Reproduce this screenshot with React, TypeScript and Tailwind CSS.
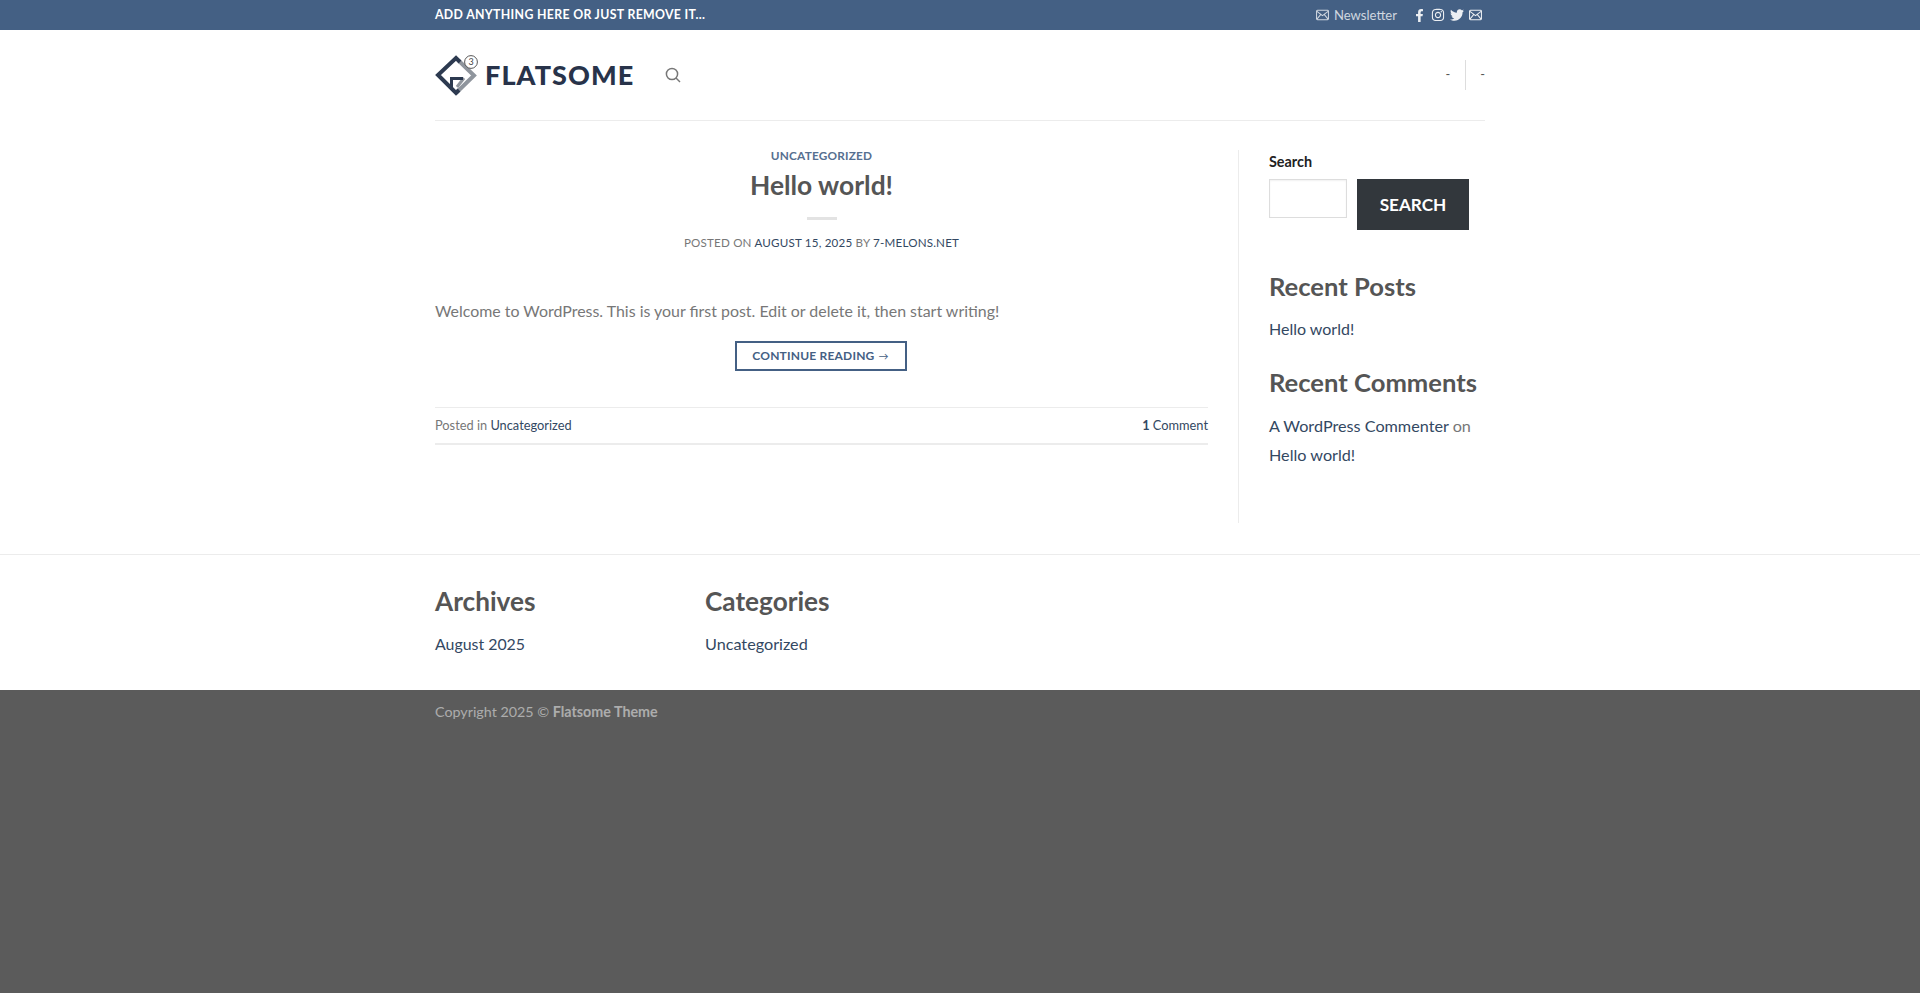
import { FaFacebookF, FaInstagram, FaTwitter } from "react-icons/fa"

function MailIcon({ className }: { className?: string }) {
  return (
    <svg viewBox="0 0 14 12" className={className} fill="none" stroke="currentColor" strokeWidth="1.1">
      <rect x="0.6" y="1" width="12.8" height="10" rx="1" />
      <path d="M1 2l6 4.6L13 2M1 10.4l4.2-5M13 10.4l-4.2-5" />
    </svg>
  )
}

function Logo() {
  return (
    <svg viewBox="0 0 44 44" className="w-[44px] h-[44px] shrink-0" fill="none">
      <path d="M24 8l15 14.5L21 40" stroke="#8f959d" strokeWidth="4" />
      <path d="M25 9l-4-4L3 22l18 18 3-3" stroke="#2d3a50" strokeWidth="4" />
      <path d="M29 25l-7 9" stroke="#8f959d" strokeWidth="3" />
      <path d="M15 25.5h13M16.5 25v10" stroke="#2d3a50" strokeWidth="3" />
      <circle cx="36" cy="9" r="6.4" fill="#fff" stroke="#444" strokeWidth="0.9" />
      <text x="36" y="12" textAnchor="middle" fontSize="9" fill="#444" fontFamily="Lato, sans-serif">3</text>
    </svg>
  )
}

function WidgetTitle({ children }: { children: string }) {
  return <h3 className="text-[25.6px] leading-[32px] font-bold text-[#555]">{children}</h3>
}

export default function App() {
  return (
    <div className="min-h-[993px] flex flex-col bg-white [font-family:Lato,sans-serif] text-[#777]">
      {/* Top bar */}
      <div className="h-[30px] bg-[#446084]">
        <div className="w-[1050px] mx-auto h-full flex items-center justify-between pt-[1px]">
          <span className="text-[12.3px] font-bold tracking-[0.33px] text-white uppercase">Add anything here or just remove it...</span>
          <div className="flex items-center text-white/75">
            <MailIcon className="w-[13px] h-[12px] mr-[5px]" />
            <span className="text-[13.1px]">Newsletter</span>
            <div className="flex items-center gap-[5px] ml-[16px] mr-[3px] text-white/90">
              <FaFacebookF className="w-[13px] h-[13px]" />
              <FaInstagram className="w-[14px] h-[14px]" />
              <FaTwitter className="w-[14px] h-[14px]" />
              <MailIcon className="w-[13px] h-[12px]" />
            </div>
          </div>
        </div>
      </div>

      {/* Header */}
      <header className="w-[1050px] mx-auto h-[91px] border-b border-[#ececec] flex items-center">
        <Logo />
        <span className="ml-[6px] mb-[2px] text-[27px] leading-none font-black tracking-[1.1px] text-[#28334a]">FLATSOME</span>
        <svg viewBox="0 0 16 16" className="ml-[31px] mb-[1px] w-[16px] h-[16px] text-[#777]" fill="none" stroke="currentColor" strokeWidth="1.5">
          <circle cx="7" cy="7" r="5.6" />
          <path d="M11 11l4 4" />
        </svg>
        <div className="ml-auto flex items-center text-[12.8px] text-[#555]">
          <span className="pr-[15px]">-</span>
          <span className="h-[30px] border-l border-[#ddd]" />
          <span className="pl-[14px]">-</span>
        </div>
      </header>

      {/* Main */}
      <main className="w-[1050px] mx-auto pt-[28px] flex h-[433px] shrink-0">
        <article className="w-[773px] shrink-0">
          <div className="text-center">
            <div className="text-[11.8px] leading-[14px] font-bold tracking-[0.2px] text-[#446084] uppercase opacity-90">Uncategorized</div>
            <h1 className="mt-[6px] text-[26.4px] leading-[32px] font-bold text-[#555]">Hello world!</h1>
            <div className="w-[30px] h-[3px] bg-[#e3e3e3] mx-auto mt-[16px]" />
            <div className="mt-[16px] text-[11.6px] leading-[14px] tracking-[0.2px] uppercase">
              Posted on <span className="text-[#334862]">August 15, 2025</span> by <span className="text-[#334862]">7-melons.net</span>
            </div>
          </div>
          <p className="mt-[49px] text-[15.93px] leading-[24px]">Welcome to WordPress. This is your first post. Edit or delete it, then start writing!</p>
          <div className="mt-[18px] text-center">
            <span className="inline-flex items-center justify-center gap-[4px] w-[172px] h-[30px] -translate-x-[1px] border-2 border-[#446084] text-[12px] font-bold tracking-[0.2px] text-[#446084] uppercase">Continue reading <span className="text-[10px] font-normal">→</span></span>
          </div>
          <div className="mt-[36px] h-[38px] border-t border-b-2 border-[#ececec] flex items-center justify-between text-[12.8px]">
            <span>Posted in <span className="text-[#334862]">Uncategorized</span></span>
            <span className="text-[#334862]"><b>1</b> Comment</span>
          </div>
        </article>

        <aside className="ml-[30px] mt-[1px] pl-[30px] flex-1 h-[373px] pt-[2px] border-l border-[#ececec]">
          <div className="text-[14.4px] leading-[20px] font-bold text-[#222]">Search</div>
          <div className="flex items-start gap-[10px] mt-[7px]">
            <div className="w-[78px] h-[39px] border border-[#ddd] shadow-[inset_0_1px_2px_rgba(0,0,0,0.06)]" />
            <button className="w-[112px] h-[51px] bg-[#32373c] text-[17.2px] font-bold text-white uppercase">Search</button>
          </div>
          <div className="mt-[40px]"><WidgetTitle>Recent Posts</WidgetTitle></div>
          <div className="mt-[15px] text-[16px] leading-[24px] text-[#334862]">Hello world!</div>
          <div className="mt-[25px]"><WidgetTitle>Recent Comments</WidgetTitle></div>
          <div className="mt-[13px] text-[16.2px] leading-[29px] text-[#334862]">
            A WordPress Commenter <span className="text-[#777]">on</span>
            <br />
            Hello world!
          </div>
        </aside>
      </main>

      {/* Footer widgets */}
      <section className="h-[136px] border-t border-[#ececec]">
        <div className="w-[1050px] mx-auto pt-[30px] flex">
          <div className="w-[270px]">
            <h3 className="text-[26.2px] leading-[32px] font-bold text-[#555]">Archives</h3>
            <div className="mt-[15px] text-[15.9px] leading-[24px] text-[#334862]">August 2025</div>
          </div>
          <div>
            <h3 className="text-[26.2px] leading-[32px] font-bold text-[#555]">Categories</h3>
            <div className="mt-[15px] text-[16.2px] leading-[24px] text-[#334862]">Uncategorized</div>
          </div>
        </div>
      </section>

      {/* Copyright */}
      <footer className="flex-1 bg-[#5b5b5b]">
        <div className="w-[1050px] mx-auto pt-[12px] text-[14.3px] leading-[20px] text-white/50">
          Copyright 2025 © <b>Flatsome Theme</b>
        </div>
      </footer>
    </div>
  )
}
